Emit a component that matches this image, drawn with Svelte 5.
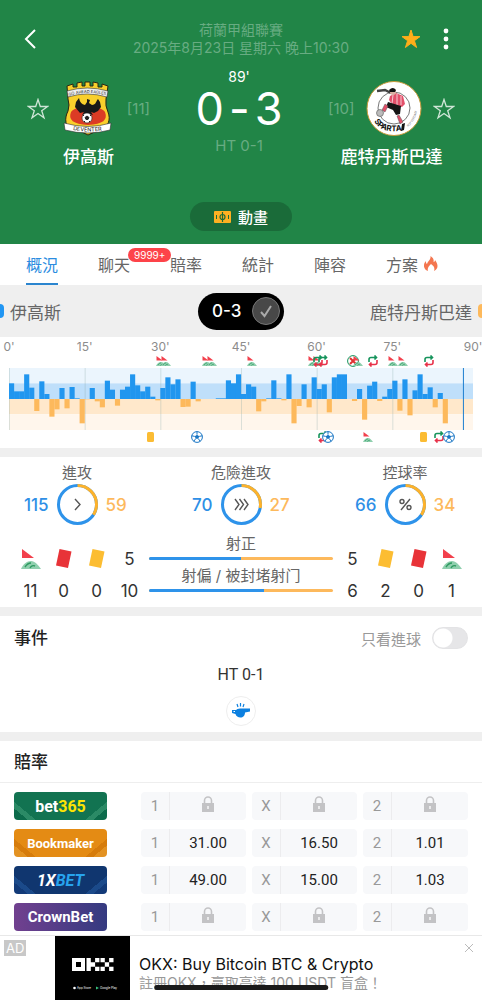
<script>
	const tabs = ['概況', '聊天', '賠率', '統計', '陣容', '方案'];
	const MINUTES = 92;

	let activeTab = '概況';
	let highlights = true;
	let goalsOnly = false;
	let favourite = true;
	let showAd = true;

	// pressure per minute, positive for home and negative for away
	const pressure = [
		47, 23, 23, 74, 34, -36, 53, 15, -53, -31, 33, -28, 36, 2, -73, -1, 33, -7, -25, 55, 28, -20, 28,
		37, 74, 41, 23, 37, 7, -4, 33, 65, 44, 59, -24, -23, 52, -7, 0, 0, 0, 2, 2, 56, 47, 74, 15, 44,
		37, -37, -7, 2, 56, 2, -4, 74, -73, -21, 44, -25, 65, 30, 44, -40, 65, 74, 74, 0, -6, 30, -62, 40,
		52, -6, 7, 30, 55, -35, 59, -49, 26, 74, 15, 35, -25, 18, -73
	];

	const ticks = [
		{ label: "0'", at: 0 },
		{ label: "15'", at: 15 },
		{ label: "30'", at: 30 },
		{ label: "45'", at: 46 },
		{ label: "60'", at: 61 },
		{ label: "75'", at: 76 },
		{ label: "90'", at: 92 }
	];

	const homeEvents = [
		{ type: 'corner', at: 30 },
		{ type: 'corner', at: 31 },
		{ type: 'corner', at: 39 },
		{ type: 'corner', at: 40 },
		{ type: 'corner', at: 48 },
		{ type: 'corner', at: 60 },
		{ type: 'corner', at: 61 },
		{ type: 'sub', at: 61 },
		{ type: 'sub', at: 62 },
		{ type: 'nogoal', at: 68 },
		{ type: 'corner', at: 69 },
		{ type: 'sub', at: 72 },
		{ type: 'corner', at: 76 },
		{ type: 'corner', at: 78 },
		{ type: 'sub', at: 83 }
	];

	const awayEvents = [
		{ type: 'yellow', at: 28 },
		{ type: 'goal', at: 37 },
		{ type: 'sub', at: 62 },
		{ type: 'goal', at: 63 },
		{ type: 'corner', at: 71 },
		{ type: 'yellow', at: 82 },
		{ type: 'sub', at: 85 },
		{ type: 'goal', at: 87 }
	];

	const rings = [
		{ title: '進攻', home: 115, away: 59, icon: 'attack' },
		{ title: '危險進攻', home: 70, away: 27, icon: 'danger' },
		{ title: '控球率', home: 66, away: 34, icon: 'percent' }
	];

	const shots = [
		{ title: '射正', home: 5, away: 5 },
		{ title: '射偏 / 被封堵射门', home: 10, away: 6 }
	];

	const homeCounts = [
		{ icon: 'corner', value: 11 },
		{ icon: 'red', value: 0 },
		{ icon: 'yellow', value: 0 }
	];
	const awayCounts = [
		{ icon: 'yellow', value: 2 },
		{ icon: 'red', value: 0 },
		{ icon: 'corner', value: 1 }
	];

	const bookmakers = [
		{ id: 'bet365', odds: [null, null, null] },
		{ id: 'bookmaker', odds: ['31.00', '16.50', '1.01'] },
		{ id: 'onexbet', odds: ['49.00', '15.00', '1.03'] },
		{ id: 'crownbet', odds: [null, null, null] }
	];
	const outcomes = ['1', 'X', '2'];

	const RING = 2 * Math.PI * 19;
	const share = (s) => s.home / (s.home + s.away);
</script>

{#snippet starOutline()}
	<svg width="22" height="22" viewBox="0 0 22 22" fill="none" stroke="#cfe6d7" stroke-width="1.3">
		<path d="M11 1.5l2.3 7h7.3l-5.9 4.3 2.3 7-6-4.3-6 4.3 2.3-7L1.4 8.5h7.3z" />
	</svg>
{/snippet}

{#snippet corner(size)}
	<svg width={size} height={size} viewBox="0 0 20 20">
		<path d="M1 0l12 9H1z" fill="#f2404c" />
		<path d="M0 20c2-5 6-8 10-8s7 4 10 8z" fill="#8fcfae" />
		<path d="M4 18c2-3 4-4 6-4M9 19c1-2 3-3 5-2" fill="none" stroke="#2f9a61" stroke-width="1.4" />
	</svg>
{/snippet}

{#snippet card(color)}
	<svg width="18" height="21" viewBox="0 0 18 21">
		<path d="M4.500 1l12 2.500-3.500 16.500-12-2.500z" fill={color} />
	</svg>
{/snippet}

{#snippet pin(type)}
	{#if type === 'corner'}
		{@render corner(10)}
	{:else if type === 'yellow'}
		<svg width="8" height="10" viewBox="0 0 8 10"><rect width="7" height="10" rx="1.5" fill="#fbbc34" /></svg>
	{:else if type === 'sub'}
		<svg width="10" height="12" viewBox="0 0 10 12" fill="none" stroke-width="1.6">
			<path d="M1 7V4.500Q1 2.500 3 2.500h5M6.500.5l2 2-2 2" stroke="#16945c" />
			<path d="M9 5v2.500q0 2-2 2H2M3.500 7.500l-2 2 2 2" stroke="#e8324a" />
		</svg>
	{:else}
		<svg width="12" height="12" viewBox="0 0 12 12">
			<circle cx="6" cy="6" r="5.4" fill="#fff" stroke={type === 'goal' ? '#1976c5' : '#16945c'} />
			{#if type === 'goal'}
				<path d="M6 3.700l2.200 1.600-.8 2.500H4.600l-.8-2.500z" fill="#1976c5" />
				<path d="M6 .6v3M.8 4.800l3 .6M11.200 4.800l-3 .6M2.800 10.300l1.800-2.500M9.200 10.300L7.400 7.800" stroke="#1976c5" />
			{:else}
				<path d="M3 3l6 6M9 3L3 9" stroke="#e03030" stroke-width="2" />
			{/if}
		</svg>
	{/if}
{/snippet}

{#snippet count(item)}
	<div class="count">
		<span class="count-icon">
			{#if item.icon === 'corner'}
				{@render corner(20)}
			{:else if item.icon === 'red'}
				{@render card('#e83338')}
			{:else}
				{@render card('#fcbd32')}
			{/if}
		</span>
		<span>{item.value}</span>
	</div>
{/snippet}

<div class="screen">
	<div class="content">
		<header>
			<div class="nav">
				<button class="plain" aria-label="Back">
					<svg width="12" height="20" viewBox="0 0 12 20" fill="none" stroke="#fff" stroke-width="2">
						<path d="M11 1L2 10l9 9" />
					</svg>
				</button>
				<div class="league">
					<div>荷蘭甲組聯賽</div>
					<div>2025年8月23日 星期六 晚上10:30</div>
				</div>
				<div class="nav-right">
					<button class="plain" aria-label="Favourite" on:click={() => (favourite = !favourite)}>
						<svg width="20" height="20" viewBox="0 0 20 20" fill={favourite ? '#ffae1a' : 'none'} stroke="#ffae1a">
							<path d="M10 1l2.100 6.600H19l-5.600 4.100 2.200 6.800-5.600-4.200-5.600 4.200 2.200-6.800L1 7.600h6.900z" />
						</svg>
					</button>
					<button class="plain" aria-label="More">
						<svg width="6" height="22" viewBox="0 0 6 22" fill="#fff">
							<circle cx="3" cy="3" r="2.4" /><circle cx="3" cy="11" r="2.4" /><circle cx="3" cy="19" r="2.4" />
						</svg>
					</button>
				</div>
			</div>

			<div class="match">
				<div class="team">
					<div class="team-row">
						<button class="plain" aria-label="Follow home">{@render starOutline()}</button>
						<svg width="49" height="55" viewBox="0 0 49 55">
							<path d="M4 5l6-2v3h4V2l5-1v4h3V1h5v4h3V1l5 1v4h4V3l6 2-2 13q-1 7 2 13c3 8 0 14-6 18q-9 2-14 5-6-4-15-5C2 46 1 38 5 30q2-6 0-12z" fill="#f9cf2c" stroke="#2b2614" />
							<path d="M8 31c4-7 30-7 34 0 3 8-2 12-17 13C10 43 5 39 8 31z" fill="#dc3b25" />
							<path d="M4 10q20-6 41 0l-1 6q-20-6-39 0z" fill="#eee" stroke="#333" stroke-width=".6" />
							<path id="eagleArc" d="M6 15q18-6 40 0" fill="none" />
							<text font-size="4" fill="#222"><textPath href="#eagleArc">GO AHEAD EAGLES</textPath></text>
							<path d="M24 18l3 1-1 3 3 2c4 0 4-4 6-6l2 3 1 5-3 4-4 2-3-1 2 3-4-1-1 2-2-2-4 1 2-3-4 1-5-6 1-5 3-4q1 6 6 7l2-3z" fill="#181818" />
							<circle cx="24" cy="37" r="5" fill="#fff" stroke="#222" stroke-width=".6" />
							<path d="M24 35l2 1.500-1 2h-2l-1-2zM20 35l1-1M28 35l-1-1M21 40l1 1M27 40l-1 1" fill="#222" stroke="#222" />
							<path d="M1 42q24 7 47 0l-1 7q-22 6-45 0z" fill="#fff" stroke="#333" stroke-width=".6" />
							<path id="deventerArc" d="M10 49q15 3 32 0" fill="none" />
							<text font-size="5.5" fill="#111"><textPath href="#deventerArc">DEVENTER</textPath></text>
						</svg>
						<span class="rank">[11]</span>
					</div>
					<div class="team-name">伊高斯</div>
				</div>

				<div class="score-box">
					<div class="clock">89'</div>
					<div class="score"><span>0</span><span>-</span><span>3</span></div>
					<div class="half">HT 0-1</div>
				</div>

				<div class="team wide">
					<div class="team-row">
						<span class="rank">[10]</span>
						<svg width="56" height="55" viewBox="0 0 56 55">
							<circle cx="28" cy="27.5" r="27" fill="#fff" stroke="#c79a3a" />
							<circle cx="28" cy="27" r="16" fill="none" stroke="#555" stroke-width=".8" />
							<path d="M11 10l8-1 6 3" fill="none" stroke="#444" stroke-width="2.5" />
							<path d="M24 15l6-3 7 3 2 8-3 3-10-3-3-4z" fill="#e2506a" />
							<path d="M27 14l-1 9M31 13v11M35 15v9" stroke="#fff" stroke-width=".7" />
							<circle cx="27" cy="11" r="3" fill="#d9b0a3" />
							<path d="M23 9q4-4 7 0l-1 2h-5z" fill="#111" />
							<path d="M22 21l13 4-1 8-4 1-3-5-7-3z" fill="#151515" />
							<path d="M19 23l-3 6 3 2 3-6zM33 34l4 7-3 2-3-8z" fill="#e2506a" stroke="#555" stroke-width=".5" />
							<path d="M36 43l3-1-1 7-3 1z" fill="#111" />
							<circle cx="14" cy="32" r="3.5" fill="#bbb" stroke="#555" stroke-width=".6" />
							<path id="spartaArc" d="M8 40q8 15 36 8" fill="none" />
							<text font-size="8" font-weight="700" fill="#111"><textPath href="#spartaArc">SPARTA</textPath></text>
							<path id="rotterdamArc" d="M42 46q9-7 10-24" fill="none" />
							<text font-size="3" fill="#777"><textPath href="#rotterdamArc">ROTTERDAM</textPath></text>
						</svg>
						<button class="plain" aria-label="Follow away">{@render starOutline()}</button>
					</div>
					<div class="team-name">鹿特丹斯巴達</div>
				</div>
			</div>

			<button class="animation">
				<svg width="17" height="12" viewBox="0 0 17 12">
					<rect width="17" height="12" rx="1" fill="#fdb022" />
					<path d="M8.500 1v10" stroke="#1a6b39" stroke-width="1.2" />
					<circle cx="8.5" cy="6" r="2.5" fill="none" stroke="#1a6b39" stroke-width="1.2" />
					<path d="M2.500 4v4M14.500 4v4" stroke="#1a6b39" />
				</svg>
				動畫
			</button>
		</header>

		<nav class="tabs">
			{#each tabs as tab}
				<button class="tab" class:active={tab === activeTab} on:click={() => (activeTab = tab)}>
					{tab}
					{#if tab === '聊天'}
						<span class="badge">9999+</span>
					{:else if tab === '方案'}
						<svg width="14" height="16" viewBox="0 0 14 16">
							<path d="M6.500 0c3 2 3.500 4 3 6 1 0 1.500-1 1.500-2 3 4 4 8-1 11 1-3 0-5-3-7-2 2-4 4-3 7-5-2-5-7-2-10 0 2 0 2 1 3 1-3 4-4 3.500-8z" fill="#f4764f" />
						</svg>
					{/if}
				</button>
			{/each}
		</nav>

		<div class="strip">
			<div class="side home">伊高斯</div>
			<label class="switch-pill">
				<span>0-3</span>
				<input type="checkbox" aria-label="0-3" bind:checked={highlights} />
				<span class="tick">
					<svg width="14" height="14" viewBox="0 0 14 14" fill="none" stroke="#aaa" stroke-width="2">
						<path d="M2 8l3.500 4L12 2" />
					</svg>
				</span>
			</label>
			<div class="side away">鹿特丹斯巴達</div>
		</div>

		<section class="timeline">
			<div class="axis">
				{#each ticks as tick}
					<span style="left: {(tick.at / MINUTES) * 100}%">{tick.label}</span>
				{/each}
			</div>
			<div class="lane">
				{#each homeEvents as event}
					<span style="left: {((event.at + 0.2) / MINUTES) * 100}%">{@render pin(event.type)}</span>
				{/each}
			</div>
			<svg class="chart" viewBox="0 0 92 186" preserveAspectRatio="none">
				<rect width="92" height="46" fill="#ebf5fd" />
				<rect y="46" width="92" height="47" fill="#bfdffa" />
				<rect y="93" width="92" height="46" fill="#ffe8cb" />
				<rect y="139" width="92" height="47" fill="#fff6ec" />
				{#each ticks.slice(0, 6) as tick}
					<rect x={tick.at} width=".2" height="186" fill="#8aa" opacity=".3" />
				{/each}
				{#each pressure as value, i}
					<rect
						x={i}
						y={value > 0 ? 93 - value : 93}
						width="1.02"
						height={Math.abs(value)}
						fill={value > 0 ? '#2196ef' : '#fdb95c'}
					/>
				{/each}
				<rect x="90" width=".2" height="186" fill="#1f7fd0" />
			</svg>
			<div class="lane">
				{#each awayEvents as event}
					<span style="left: {((event.at + 0.2) / MINUTES) * 100}%">{@render pin(event.type)}</span>
				{/each}
			</div>
		</section>

		<section class="stats">
			<div class="rings">
				{#each rings as ring}
					<div class="ring">
						<div class="label">{ring.title}</div>
						<div class="ring-row">
							<span class="num-home">{ring.home}</span>
							<svg width="41" height="41" viewBox="0 0 41 41" fill="none">
								<circle cx="20.5" cy="20.5" r="19" stroke="#2e93ea" stroke-width="3" />
								<circle
									cx="20.5"
									cy="20.5"
									r="19"
									stroke="#fdb22b"
									stroke-width="3"
									stroke-dasharray="{(1 - share(ring)) * RING} {RING}"
									transform="rotate(-90 20.5 20.5)"
								/>
								<g stroke="#555" stroke-width="1.4">
									{#if ring.icon === 'attack'}
										<path d="M18 15l5 5.500-5 5.500" />
									{:else if ring.icon === 'danger'}
										<path d="M14 15l4 5.500-4 5.500M18.500 15l4 5.500-4 5.500M23 15l4 5.500-4 5.500" />
									{:else}
										<path d="M25 15L16 26" />
										<circle cx="17" cy="17.5" r="2" />
										<circle cx="24" cy="23.5" r="2" />
									{/if}
								</g>
							</svg>
							<span class="num-away">{ring.away}</span>
						</div>
					</div>
				{/each}
			</div>

			<div class="totals">
				<div class="counts">
					{#each homeCounts as item}
						{@render count(item)}
					{/each}
					<div class="count">
						{#each shots as shot}<span>{shot.home}</span>{/each}
					</div>
				</div>
				<div class="bars">
					{#each shots as shot}
						<div class="label">{shot.title}</div>
						<div class="bar"><div class="bar-fill" style="width: {share(shot) * 100}%"></div></div>
					{/each}
				</div>
				<div class="counts">
					<div class="count">
						{#each shots as shot}<span>{shot.away}</span>{/each}
					</div>
					{#each awayCounts as item}
						{@render count(item)}
					{/each}
				</div>
			</div>
		</section>

		<section class="events">
			<div class="section-head">
				<h2>事件</h2>
				<label class="goals-only">
					只看進球
					<input type="checkbox" bind:checked={goalsOnly} />
				</label>
			</div>
			<div class="event-title">HT 0-1</div>
			<div class="whistle">
				<svg width="20" height="16" viewBox="0 0 20 16">
					<path d="M9 5.500h10v3l-5 1c0 3-2 5-4.500 5S5 13 4.500 11L1 10V7h4q1-1.500 4-1.500z" fill="#0d80e0" />
					<path d="M2.500 8.500h1.500" stroke="#fff" />
					<path d="M6 1l1 3M9.500 0v3.500M13 1l-1 3" stroke="#0d80e0" stroke-width="1.2" />
				</svg>
			</div>
		</section>

		<section class="odds">
			<div class="odds-head"><h2>賠率</h2></div>
			<div class="odds-list">
				{#each bookmakers as bookie}
					<div class="odds-row">
						<a href="#{bookie.id}" class="logo {bookie.id}">
							{#if bookie.id === 'bet365'}
								bet<span>365</span>
							{:else if bookie.id === 'bookmaker'}
								Bookmaker
							{:else if bookie.id === 'onexbet'}
								1X<span>BET</span>
							{:else}
								CrownBet
							{/if}
						</a>
						<div class="cells">
							{#each bookie.odds as price, i}
								<div class="cell">
									<span class="outcome">{outcomes[i]}</span>
									<span class="price">
										{#if price}
											{price}
										{:else}
											<svg width="14" height="20" viewBox="0 0 14 20">
												<path d="M3.500 7V4.500a3.500 3.500 0 017 0V7" fill="none" stroke="#c3c3c5" stroke-width="1.6" />
												<rect x="1" y="7" width="12" height="9" fill="#c3c3c5" />
												<path d="M7 10v3" stroke="#fff" stroke-width="1.3" />
											</svg>
										{/if}
									</span>
								</div>
							{/each}
						</div>
					</div>
				{/each}
			</div>
		</section>
	</div>

	{#if showAd}
		<aside class="ad">
			<span class="ad-tag">AD</span>
			<div class="ad-image">
				<svg width="75" height="64" viewBox="0 0 75 64" fill="#fff">
					<path d="M17 22h13v13H17zM21 26v5h5v-5z" fill-rule="evenodd" />
					<path d="M31.500 22h4.300v4.300h4.300v4.400h-4.300V35h-4.300zM40.100 22h4.300v4.300h-4.300zM40.100 30.700h4.300V35h-4.300z" />
					<path d="M45.500 22h4.300v4.300h-4.300zM54.100 22h4.400v4.300h-4.400zM49.800 26.300h4.300v4.400h-4.300zM45.500 30.700h4.300V35h-4.300zM54.100 30.700h4.400V35h-4.400z" />
					<circle cx="19.5" cy="52" r="1.3" />
					<text x="22" y="53" font-size="3">App Store</text>
					<path d="M41 50.500l3 1.500-3 1.500z" fill="#39c07b" />
					<text x="45" y="53" font-size="3">Google Play</text>
				</svg>
			</div>
			<div class="ad-text">
				<div class="ad-title">OKX: Buy Bitcoin BTC &amp; Crypto</div>
				<div class="ad-sub">註冊OKX，贏取高達 100 USDT 盲盒！</div>
			</div>
			<button class="plain ad-close" aria-label="Close" on:click={() => (showAd = false)}>
				<svg width="10" height="10" viewBox="0 0 10 10" stroke="#bbb"><path d="M1 1l8 8M9 1L1 9" /></svg>
			</button>
		</aside>
	{/if}
	<div class="home-indicator"></div>
</div>

<style>
	:global(body) {
		background: #fff;
		font-family: Inter, 'Noto Sans CJK TC', sans-serif;
		color: #333;
	}

	button {
		font-family: inherit;
	}

	svg {
		display: block;
		flex-shrink: 0;
	}

	h2 {
		margin: 0;
		font-size: 17px;
		line-height: 24px;
		font-weight: 500;
		color: #222;
	}

	.screen {
		display: flex;
		flex-direction: column;
		height: 100vh;
		overflow: hidden;
	}

	.content {
		flex: 1;
		min-height: 0;
		overflow: hidden;
	}

	.plain {
		padding: 0;
		border: none;
		background: none;
		cursor: pointer;
	}

	header {
		display: flex;
		flex-direction: column;
		align-items: center;
		padding: 21px 0 13px;
		background: #218547;
		color: #fff;
	}

	.nav {
		display: grid;
		grid-template-columns: 1fr auto 1fr;
		align-items: center;
		align-self: stretch;
		padding: 0 24px;
	}

	.league {
		font-size: 14px;
		line-height: 18px;
		text-align: center;
		color: #68ac82;
	}

	.nav-right {
		display: flex;
		justify-content: flex-end;
		align-items: center;
		gap: 22px;
		padding-right: 9px;
	}

	.match {
		display: flex;
		justify-content: space-between;
		align-self: stretch;
		padding: 11px 27px 0;
	}

	.team {
		width: 123px;
		padding-top: 13px;
	}

	.team.wide {
		width: 127px;
	}

	.team-row {
		display: flex;
		align-items: center;
		justify-content: space-between;
	}

	.rank {
		font-size: 15px;
		color: #68ac82;
	}

	.team-name {
		margin-top: 9px;
		font-size: 17px;
		line-height: 24px;
		font-weight: 500;
		text-align: center;
		white-space: nowrap;
	}

	.score-box {
		text-align: center;
	}

	.clock {
		font-size: 14px;
		line-height: 18px;
	}

	.score {
		display: flex;
		gap: 5px;
		font-size: 45px;
		line-height: 46px;
		font-weight: 400;
	}

	.half {
		margin-top: 5px;
		font-size: 15px;
		line-height: 18px;
		color: #68ac82;
	}

	.animation {
		display: flex;
		align-items: center;
		justify-content: center;
		gap: 7px;
		width: 102px;
		height: 29px;
		margin-top: 33px;
		padding: 0;
		border: none;
		border-radius: 15px;
		background: #1a6b39;
		color: #fff;
		font-size: 15px;
		font-weight: 500;
	}

	.tabs {
		display: flex;
		gap: 40px;
		height: 41px;
		padding-left: 26px;
		box-sizing: border-box;
		overflow: hidden;
	}

	.tab {
		position: relative;
		display: flex;
		align-items: center;
		flex-shrink: 0;
		gap: 6px;
		padding: 0;
		border: none;
		border-bottom: 2px solid transparent;
		background: none;
		font-size: 16px;
		color: #666;
		cursor: pointer;
	}

	.tab.active {
		border-color: #2b85cf;
		color: #2b8ce0;
	}

	.badge {
		position: absolute;
		left: 30px;
		top: 4px;
		padding: 0 6px;
		border-radius: 7px;
		background: #fd4349;
		color: #fff;
		font-size: 10px;
		line-height: 14px;
	}

	.strip {
		display: grid;
		grid-template-columns: 1fr auto 1fr;
		align-items: center;
		height: 52px;
		background: #efefef;
		color: #666;
	}

	.side {
		display: flex;
		align-items: center;
		gap: 6px;
		font-size: 17px;
	}

	.away {
		justify-content: flex-end;
	}

	.home::before,
	.away::after {
		content: '';
		width: 4px;
		height: 14px;
		border-radius: 0 4px 4px 0;
		background: #2196f3;
	}

	.away::after {
		border-radius: 4px 0 0 4px;
		background: #fdb95c;
	}

	.switch-pill {
		position: relative;
		display: flex;
		align-items: center;
		justify-content: space-between;
		width: 86px;
		height: 37px;
		padding: 0 4px 0 14px;
		box-sizing: border-box;
		border-radius: 19px;
		background: #000;
		color: #fff;
		font-size: 17px;
		font-weight: 500;
	}

	.switch-pill input {
		position: absolute;
		inset: 0;
		width: 100%;
		height: 100%;
		margin: 0;
		opacity: 0;
	}

	.tick {
		display: flex;
		align-items: center;
		justify-content: center;
		width: 28px;
		height: 28px;
		box-sizing: border-box;
		border: 1px solid #777;
		border-radius: 50%;
		background: #484848;
	}

	.timeline {
		padding: 3px 9px 4px;
		border-bottom: 9px solid #efefef;
	}

	.axis,
	.lane {
		position: relative;
		height: 14px;
		font-size: 12px;
		line-height: 14px;
		color: #8c8c8c;
	}

	/* labels and pins sit at their minute */
	.axis span,
	.lane span {
		position: absolute;
		transform: translateX(-50%);
	}

	.lane span {
		display: flex;
		align-items: center;
		height: 14px;
	}

	.chart {
		width: 100%;
		height: 62px;
	}

	.stats {
		border-bottom: 9px solid #efefef;
	}

	.rings {
		display: grid;
		grid-template-columns: repeat(3, 1fr);
		gap: 10px;
		padding-top: 6px;
	}

	.label {
		font-size: 15px;
		line-height: 20px;
		text-align: center;
		color: #666;
	}

	.ring-row {
		display: grid;
		grid-template-columns: 1fr auto 1fr;
		align-items: center;
		gap: 8px;
		padding-top: 1px;
		font-size: 17px;
		font-weight: 500;
	}

	.num-home {
		text-align: right;
		color: #2e8fe6;
	}

	.num-away {
		color: #fdb95c;
	}

	.totals {
		display: grid;
		grid-template-columns: 132px 1fr 132px;
		gap: 3px;
		padding: 9px 14px 0;
	}

	.counts {
		display: grid;
		grid-template-columns: repeat(4, 1fr);
		padding-top: 8px;
	}

	.count {
		display: grid;
		grid-template-rows: 33px 32px;
		place-items: center;
		font-size: 17px;
	}

	.bar {
		height: 3px;
		margin: 3px 0 6px;
		border-radius: 2px;
		background: #fdb95c;
		overflow: hidden;
	}

	.bar-fill {
		height: 100%;
		background: #2e93ea;
	}

	.events {
		padding-bottom: 6px;
		border-bottom: 9px solid #efefef;
	}

	.section-head {
		display: flex;
		align-items: center;
		justify-content: space-between;
		height: 44px;
		padding: 0 14px;
	}

	.goals-only {
		display: flex;
		align-items: center;
		gap: 11px;
		font-size: 15px;
		color: #999;
	}

	.goals-only input {
		appearance: none;
		width: 36px;
		height: 22px;
		margin: 0;
		border: 1px solid #e3e3e5;
		border-radius: 11px;
		background: radial-gradient(circle at 10px 10px, #fff 9px, #e6e6e8 10px);
	}

	.goals-only input:checked {
		background: radial-gradient(circle at 24px 10px, #fff 9px, #2e93ea 10px);
	}

	.event-title {
		font-family: Roboto, sans-serif;
		font-size: 16px;
		line-height: 30px;
		text-align: center;
	}

	.whistle {
		display: flex;
		align-items: center;
		justify-content: center;
		width: 28px;
		height: 28px;
		margin: 6px auto 0;
		border: 1px solid #eee;
		border-radius: 50%;
	}

	.odds-head {
		padding: 9px 14px 8px;
		border-bottom: 1px solid #eee;
	}

	.odds-list {
		display: grid;
		gap: 9px;
		padding: 9px 14px;
	}

	.odds-row {
		display: grid;
		grid-template-columns: 93px 1fr;
		gap: 34px;
		height: 28px;
	}

	.logo {
		--shade: #0c6b4b;
		--stripe: #2b8a66;
		--base: #127351;
		display: flex;
		align-items: center;
		justify-content: center;
		border-radius: 4px;
		background:
			linear-gradient(40deg, var(--shade) 9px, var(--stripe) 9px 14px, transparent 14px),
			linear-gradient(-40deg, var(--shade) 9px, var(--stripe) 9px 14px, transparent 14px),
			var(--base);
		font-family: Roboto, sans-serif;
		font-size: 16px;
		font-weight: 700;
		color: #fff;
		text-decoration: none;
	}

	.bet365 span {
		color: #fde403;
	}

	.bookmaker {
		--shade: #e39222;
		--stripe: #d67c0c;
		--base: #e48b14;
		font-size: 13px;
	}

	.onexbet {
		--shade: #123a78;
		--stripe: #1b4a8a;
		--base: #10366f;
		font-style: italic;
	}

	.onexbet span {
		color: #27a4ee;
	}

	.crownbet {
		background: linear-gradient(90deg, #71408f, #343a80);
		font-size: 15px;
	}

	.cells {
		display: grid;
		grid-template-columns: repeat(3, 1fr);
		gap: 6px;
		font-family: Roboto, sans-serif;
	}

	.cell {
		display: grid;
		grid-template-columns: 29px 1fr;
		border-radius: 4px;
		background: #f7f8fa;
	}

	.outcome,
	.price {
		display: flex;
		align-items: center;
		justify-content: center;
		font-size: 15px;
		color: #222;
	}

	.outcome {
		border-right: 1px solid #ececee;
		color: #999;
	}

	.ad {
		position: relative;
		display: flex;
		height: 64px;
		padding-left: 55px;
		border-top: 1px solid #e8e8e8;
		background: #fff;
	}

	.ad-tag {
		position: absolute;
		left: 4px;
		top: 4px;
		padding: 0 2px;
		background: #c8c8c8;
		color: #fff;
		font-size: 13px;
		line-height: 16px;
	}

	.ad-image {
		width: 75px;
		background: #000;
	}

	.ad-text {
		padding: 18px 0 0 9px;
		white-space: nowrap;
	}

	.ad-title {
		font-size: 16px;
		line-height: 20px;
		color: #111;
	}

	.ad-sub {
		font-size: 14px;
		line-height: 18px;
		color: #999;
	}

	.ad-close {
		position: absolute;
		right: 8px;
		top: 7px;
	}

	.home-indicator {
		position: fixed;
		left: 50%;
		bottom: 10px;
		width: 36%;
		height: 5px;
		border-radius: 3px;
		background: #1a1a1a;
		transform: translateX(-50%);
	}
</style>
